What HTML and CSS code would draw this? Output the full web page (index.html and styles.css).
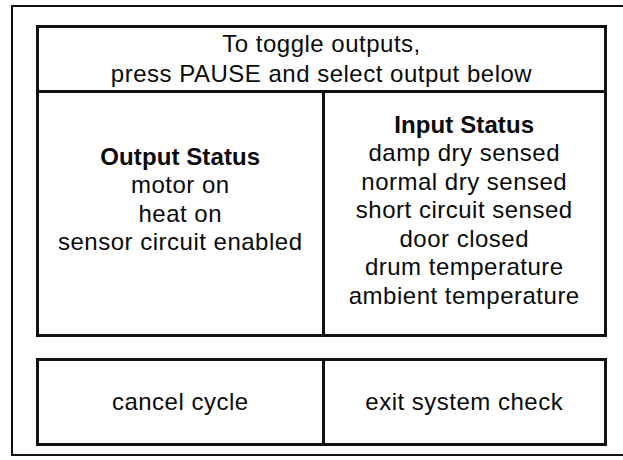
FILE: index.html
```html
<!DOCTYPE html>
<html>
<head>
<meta charset="utf-8">
<link rel="stylesheet" href="styles.css">
</head>
<body>
<div class="frame">
  <div class="panel">
    <div class="header">To toggle outputs,<br>press PAUSE and select output below</div>
    <div class="status">
      <div class="col col-out">
        <div class="title">Output Status</div>
        <div>motor on</div>
        <div>heat on</div>
        <div>sensor circuit enabled</div>
      </div>
      <div class="col col-in">
        <div class="title">Input Status</div>
        <div>damp dry sensed</div>
        <div>normal dry sensed</div>
        <div>short circuit sensed</div>
        <div>door closed</div>
        <div>drum temperature</div>
        <div>ambient temperature</div>
      </div>
    </div>
  </div>
  <div class="buttons">
    <div class="btn">cancel cycle</div>
    <div class="btn btn-right">exit system check</div>
  </div>
</div>
</body>
</html>
```
FILE: styles.css
```css
html, body {
  margin: 0;
  padding: 0;
  background: #fff;
}
body {
  font-family: "Liberation Sans", Arial, sans-serif;
  font-size: 24px;
  letter-spacing: 0.5px;
  color: #0a0a0a;
}
.frame {
  margin: 5px 0 0 11px;
  border: 2px solid #111;
  border-right: none;
  height: 451px;
  box-sizing: border-box;
  padding: 18px 0 0 23px;
}
.panel {
  width: 571px;
  border: 3px solid #111;
  box-sizing: border-box;
}
.header {
  height: 61px;
  border-bottom: 3px solid #111;
  text-align: center;
  line-height: 30px;
  padding-top: 0.5px;
  box-sizing: content-box;
}
.status {
  display: grid;
  grid-template-columns: 1fr 1fr;
  height: 241px;
}
.col {
  text-align: center;
  line-height: 28.6px;
}
.col-out {
  padding-top: 50px;
}
.col-in {
  border-left: 3px solid #111;
  padding-top: 18px;
}
.title {
  font-weight: bold;
  letter-spacing: 0.1px;
}
.buttons {
  margin-top: 21px;
  width: 571px;
  height: 88px;
  border: 3px solid #111;
  box-sizing: border-box;
  display: grid;
  grid-template-columns: 1fr 1fr;
}
.btn {
  display: flex;
  align-items: center;
  justify-content: center;
}
.btn-right {
  border-left: 3px solid #111;
}
```
